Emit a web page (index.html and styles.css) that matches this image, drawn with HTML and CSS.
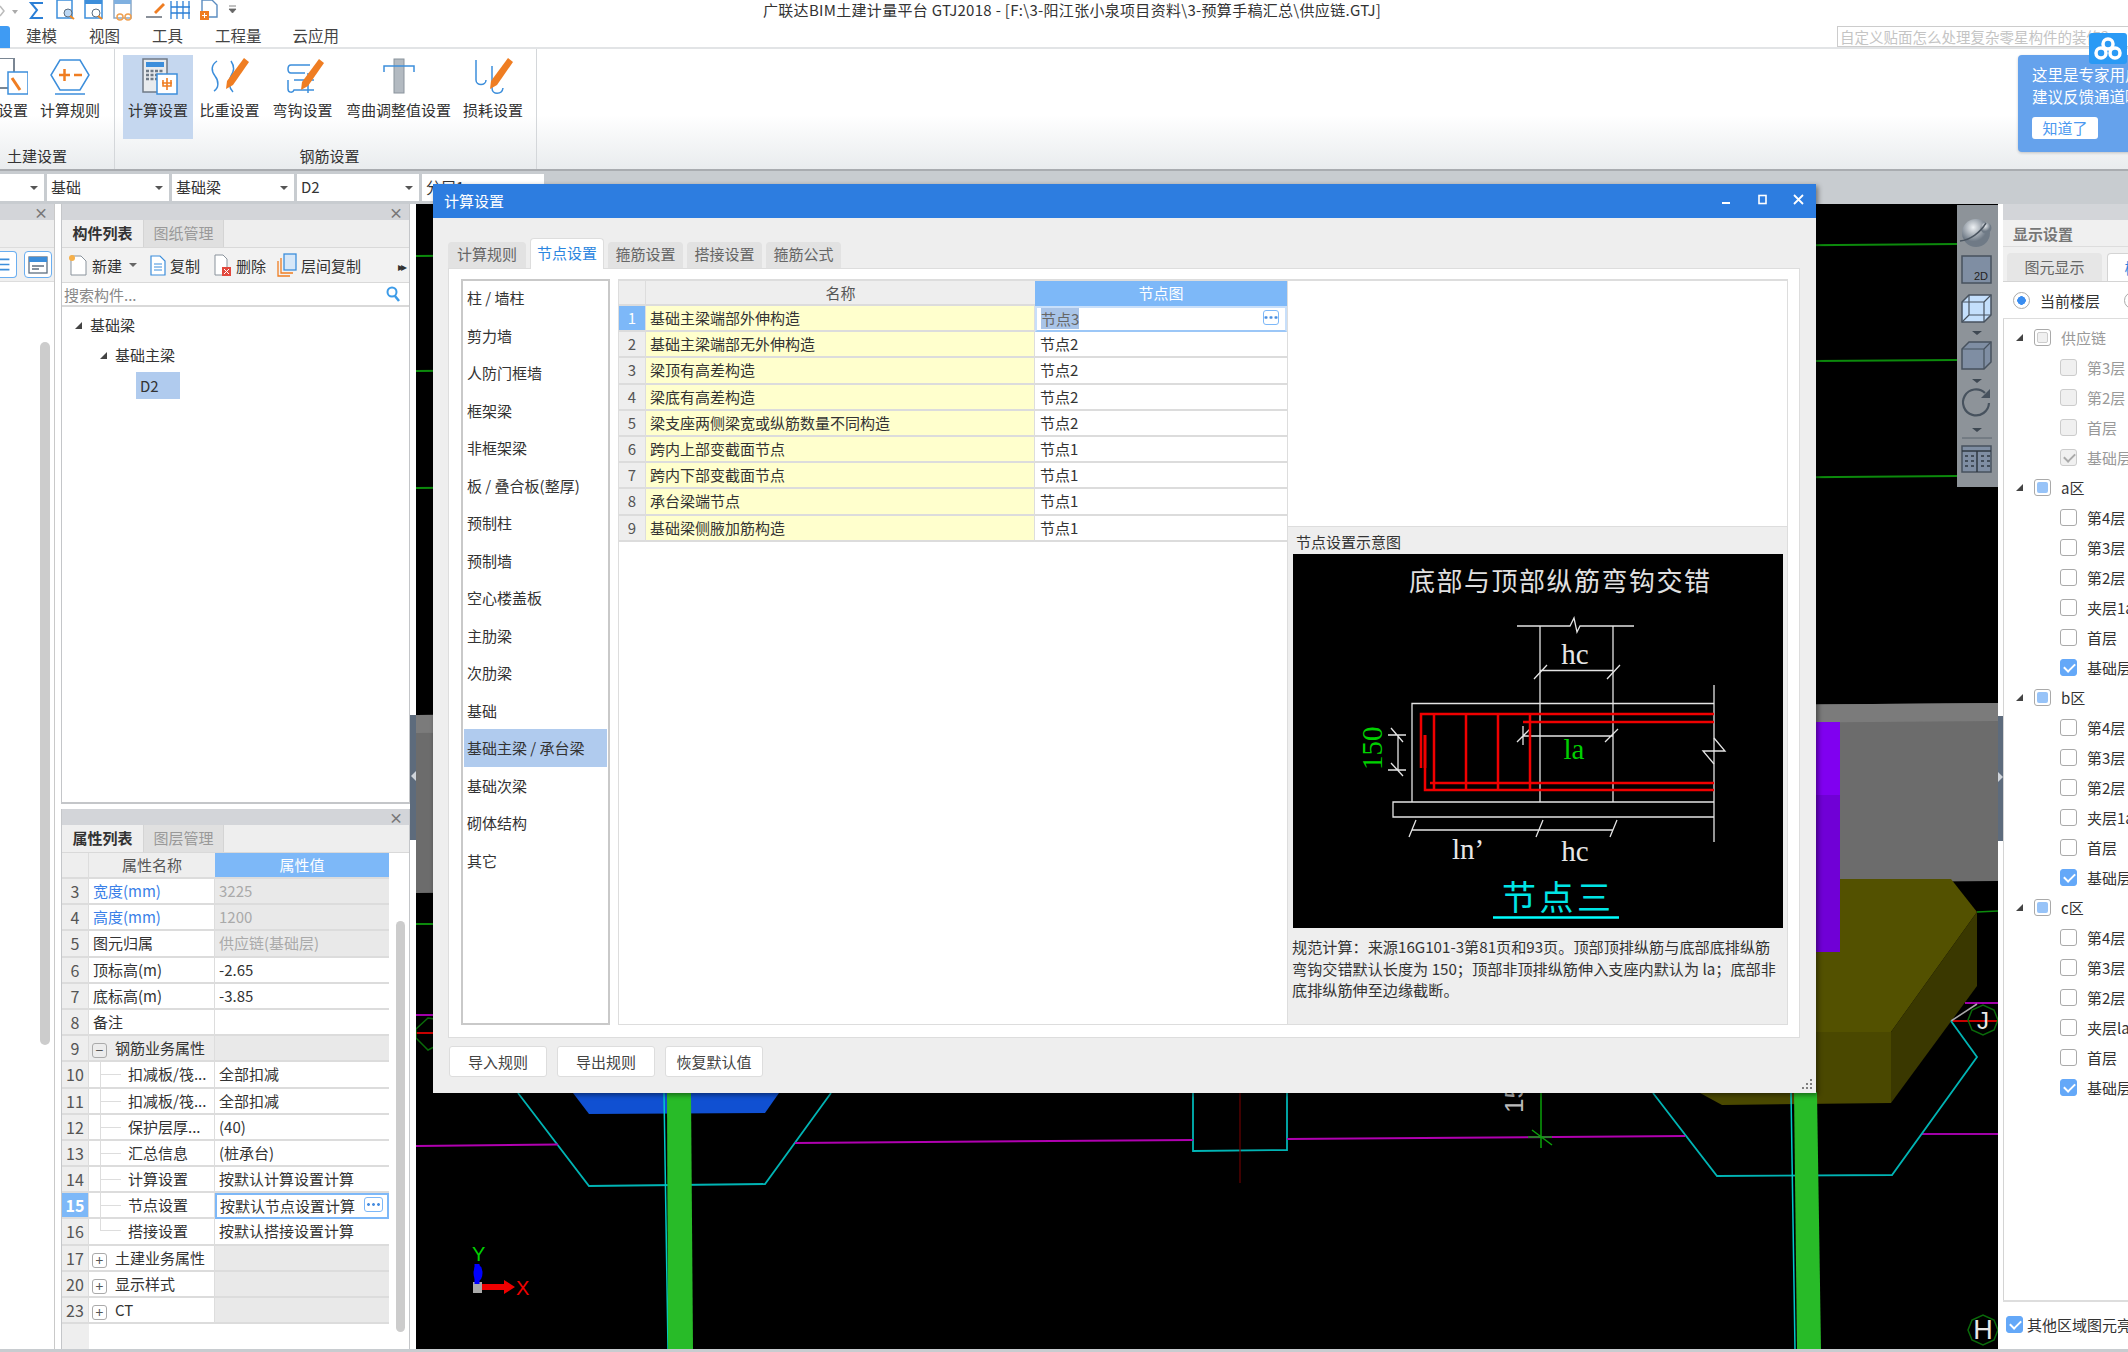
FILE: index.html
```html
<!DOCTYPE html>
<html lang="zh-CN">
<head>
  <meta charset="UTF-8">
  <title>广联达BIM土建计量平台 GTJ2018</title>
  <link rel="stylesheet" href="styles.css">
</head>
<body>
<div class="app">

  <!-- title bar -->
  <div class="titlebar">
    <div class="quick">
      <svg width="240" height="22" viewBox="0 0 240 22">
        <path d="M0 6l4 5-4 5" fill="none" stroke="#bbb" stroke-width="1.5"/>
        <path d="M12 10h6l-3 4z" fill="#aaa"/>
        <path d="M43 3H31l6 7-6 8h12" fill="none" stroke="#2b7fd6" stroke-width="2"/>
        <rect x="57" y="0" width="15" height="18" fill="#fff" stroke="#3c8edb" stroke-width="1.5"/>
        <circle cx="68" cy="13" r="4" fill="#bcd7f3" stroke="#5a6d80"/><path d="M70 16l4 3" stroke="#f08a24" stroke-width="2"/>
        <rect x="85" y="0" width="17" height="18" fill="#fff" stroke="#3c8edb" stroke-width="1.5"/><rect x="85" y="0" width="17" height="4" fill="#3c8edb"/>
        <circle cx="96" cy="13" r="4" fill="#fff" stroke="#5a6d80"/><path d="M98 16l4 3" stroke="#f08a24" stroke-width="2"/>
        <rect x="114" y="0" width="17" height="18" fill="#fff" stroke="#8aa8c6" stroke-width="1.5"/><rect x="114" y="0" width="17" height="4" fill="#7fb0e0"/>
        <circle cx="120" cy="17" r="3" fill="none" stroke="#f0a050" stroke-width="1.5"/><circle cx="128" cy="17" r="3" fill="none" stroke="#f0a050" stroke-width="1.5"/>
        <path d="M154 12l9-9 2 2-9 9z" fill="#ef7d22"/><path d="M146 17h16" stroke="#8a9099" stroke-width="2"/>
        <path d="M171 1v18M177 1v18M183 1v18M189 1v18M171 7h19M171 13h19" fill="none" stroke="#2b7fd6" stroke-width="1.3"/>
        <path d="M202 0h10l5 5v12h-15z" fill="#fff" stroke="#5a8cc0" stroke-width="1.4"/><rect x="200" y="11" width="9" height="9" fill="#ef7d22"/><path d="M204.500 13v5M202 15.500h5" stroke="#fff"/>
        <path d="M229 6h7M229 9h7l-3.500 4z" fill="#666" stroke="#666" stroke-width=".8"/>
      </svg>
    </div>
    <div class="apptitle">广联达BIM土建计量平台 GTJ2018 - [F:\3-阳江张小泉项目资料\3-预算手稿汇总\供应链.GTJ]</div>
  </div>

  <!-- menu -->
  <div class="menubar">
    <span class="menu-active"></span>
    <span class="menu-item m1">建模</span>
    <span class="menu-item m2">视图</span>
    <span class="menu-item m2">工具</span>
    <span class="menu-item m2">工程量</span>
    <span class="menu-item m3">云应用</span>
    <div class="asksearch">自定义贴面怎么处理复杂零星构件的装修？</div>
  </div>

  <!-- ribbon -->
  <div class="ribbon">
    <div class="rb-group g1">
      <div class="rb-btns">
        <div class="rb-btn w60 first">
          <svg class="rb-icon" width="60" height="38" viewBox="0 0 60 38"><rect x="20" y="0" width="26" height="30" fill="#fff" stroke="#7a8693" stroke-width="2"/><rect x="40" y="14" width="20" height="22" fill="#fff" stroke="#3c8edb" stroke-width="1.5"/><path d="M44 20l8 12" stroke="#ef7d22" stroke-width="3"/></svg>
          <span>软件设置</span>
        </div>
        <div class="rb-btn w60 second">
          <svg class="rb-icon" width="60" height="38" viewBox="0 0 60 38"><path d="M20 2h20l9 15-9 15H20L11 17z" fill="#fff" stroke="#3c8edb" stroke-width="1.5"/><path d="M19 17h11M24.500 11v12" stroke="#ef7d22" stroke-width="2.500"/><path d="M34 17h8" stroke="#ef7d22" stroke-width="2.500"/><path d="M15 36h30" stroke="#3c8edb" stroke-width="1.5"/></svg>
          <span>计算规则</span>
        </div>
      </div>
      <div class="rb-label left">土建设置</div>
    </div>
    <div class="rb-group g2">
      <div class="rb-btns">
        <div class="rb-btn w70 on">
          <svg class="rb-icon" width="50" height="38" viewBox="0 0 50 38"><rect x="10" y="1" width="24" height="33" fill="#e8ebee" stroke="#6f7a86" stroke-width="1.5"/><rect x="13" y="4" width="18" height="5" fill="#3c8edb"/><path d="M13 13h18M13 17h18M13 21h12" stroke="#6f7a86" stroke-width="2.500" stroke-dasharray="3 1.500"/><rect x="24" y="16" width="20" height="20" fill="#fff" stroke="#3c8edb" stroke-width="1.5"/><path d="M34 20v12M29 25h10M30 22v6h8v-6" fill="none" stroke="#ef7d22" stroke-width="1.600"/></svg>
          <span>计算设置</span>
        </div>
        <div class="rb-btn w73">
          <svg class="rb-icon" width="50" height="38" viewBox="0 0 50 38"><path d="M12 3c-6 4-6 10-2 15s4 12-1 15M26 3c4 6 3 10 0 15s-2 12 2 16" fill="none" stroke="#3c8edb" stroke-width="1.500"/><path d="M39 0l5 4-16 23-7 4 1-8z" fill="#ef7d22"/></svg>
          <span>比重设置</span>
        </div>
        <div class="rb-btn w73">
          <svg class="rb-icon" width="50" height="38" viewBox="0 0 50 38"><path d="M32 7H13c-4 0-4 8 0 8h14M30 15v20M10 22v9c0 4 5 4 6 1h20M16 22h20" fill="none" stroke="#3c8edb" stroke-width="1.500"/><path d="M41 1l5 4-16 23-7 4 1-8z" fill="#ef7d22"/></svg>
          <span>弯钩设置</span>
        </div>
        <div class="rb-btn w119">
          <svg class="rb-icon" width="50" height="38" viewBox="0 0 50 38"><rect x="20" y="1" width="10" height="34" fill="#b3bac1" stroke="#8a939c"/><path d="M10 14V8h30v6" fill="none" stroke="#3c8edb" stroke-width="1.500"/></svg>
          <span>弯曲调整值设置</span>
        </div>
        <div class="rb-btn w70">
          <svg class="rb-icon" width="50" height="38" viewBox="0 0 50 38"><path d="M8 2v20c0 6 10 6 10 0M24 8v22c0 7 10 7 11 0" fill="none" stroke="#3c8edb" stroke-width="1.500"/><path d="M40 0l5 4-16 23-7 4 1-8z" fill="#ef7d22"/></svg>
          <span>损耗设置</span>
        </div>
      </div>
      <div class="rb-label">钢筋设置</div>
    </div>
  </div>

  <!-- layer / type combos -->
  <div class="combobar">
    <div class="combo c0"></div>
    <div class="combo">基础</div>
    <div class="combo">基础梁</div>
    <div class="combo">D2</div>
    <div class="combo">分层1</div>
  </div>

  <div class="main">

    <!-- collapsed navigation strip -->
    <div class="strip">
      <div class="phead"><span class="px">×</span></div>
      <div class="strip-tabs"></div>
      <div class="strip-tools">
        <span class="view-btn cut"><svg width="17" height="25" viewBox="0 0 17 25"><path d="M0 7h10M0 12.500h10M0 18h10" stroke="#3c8edb" stroke-width="1.800"/></svg></span>
        <span class="view-btn"><svg width="22" height="22" viewBox="0 0 22 22"><rect x="2" y="3" width="18" height="16" fill="#fff" stroke="#5f6f80" stroke-width="1.300"/><rect x="2" y="3" width="18" height="5" fill="#3c8edb"/><path d="M5 12h12M5 15h7" stroke="#5f6f80" stroke-width="1.300"/></svg></span>
      </div>
      <div class="strip-scroll"></div>
    </div>

    <!-- left panels -->
    <div class="leftcol">
      <div class="panel comp">
        <div class="phead"><span class="px">×</span></div>
        <div class="ptabs">
          <span class="ptab on">构件列表</span>
          <span class="ptab">图纸管理</span>
        </div>
        <div class="ptools">
          <svg class="t-ico new" width="20" height="24" viewBox="0 0 20 24"><path d="M3 3h10l5 5v14H3z" fill="#fff" stroke="#8a939c"/><circle cx="4" cy="5" r="3" fill="#f6b04a"/></svg>
          <span class="t-txt">新建</span><span class="t-caret"></span>
          <svg class="t-ico copy" width="16" height="22" viewBox="0 0 16 22"><path d="M1 2h9l5 5v14H1z" fill="#fff" stroke="#3c8edb" stroke-width="1.200"/><path d="M4 10h8M4 13h8M4 16h8" stroke="#3c8edb"/></svg>
          <span class="t-txt">复制</span>
          <svg class="t-ico del" width="18" height="24" viewBox="0 0 18 24"><path d="M1 2h8l4 4v16H1z" fill="#fff" stroke="#8a939c"/><rect x="8" y="14" width="9" height="9" fill="#e2483d"/><path d="M10 16l5 5M15 16l-5 5" stroke="#fff"/></svg>
          <span class="t-txt">删除</span>
          <svg class="t-ico cross" width="20" height="24" viewBox="0 0 20 24"><path d="M1 8v15h12M4 5v15h12" fill="none" stroke="#ef7d22" stroke-width="1.300"/><rect x="7" y="1" width="12" height="16" fill="#d6e7f8" stroke="#3c8edb" stroke-width="1.300"/></svg>
          <span class="t-txt">层间复制</span>
          <span class="t-more">▸▸</span>
        </div>
        <div class="psearch"><span>搜索构件...</span>
          <svg width="16" height="18" viewBox="0 0 16 18"><circle cx="7" cy="7" r="4.500" fill="none" stroke="#3c9be8" stroke-width="2"/><path d="M10 11l4 5" stroke="#3c9be8" stroke-width="2.500"/></svg>
        </div>
        <div class="ctree">
          <div class="ct l1"><i class="tri"></i>基础梁</div>
          <div class="ct l2"><i class="tri"></i>基础主梁</div>
          <div class="ct l3"><span class="ct-sel">D2</span></div>
        </div>
      </div>

      <div class="panel prop">
        <div class="phead"><span class="px">×</span></div>
        <div class="ptabs">
          <span class="ptab on">属性列表</span>
          <span class="ptab">图层管理</span>
        </div>
        <div class="prop-body">
          <div class="prop-col">
            <div class="pgrid">
              <div class="pc num"></div><div class="pc hdr">属性名称</div><div class="pc hdr sel">属性值</div>
              <div class="pc num">3</div><div class="pc name blue">宽度(mm)</div><div class="pc val ro">3225</div>
              <div class="pc num">4</div><div class="pc name blue">高度(mm)</div><div class="pc val ro">1200</div>
              <div class="pc num">5</div><div class="pc name">图元归属</div><div class="pc val ro">供应链(基础层)</div>
              <div class="pc num">6</div><div class="pc name">顶标高(m)</div><div class="pc val">-2.65</div>
              <div class="pc num">7</div><div class="pc name">底标高(m)</div><div class="pc val">-3.85</div>
              <div class="pc num">8</div><div class="pc name">备注</div><div class="pc val"></div>
              <div class="pc num">9</div><div class="pc name group"><i class="pm">−</i>钢筋业务属性</div><div class="pc val grp"></div>
              <div class="pc num">10</div><div class="pc name child">扣减板/筏...</div><div class="pc val">全部扣减</div>
              <div class="pc num">11</div><div class="pc name child">扣减板/筏...</div><div class="pc val">全部扣减</div>
              <div class="pc num">12</div><div class="pc name child">保护层厚...</div><div class="pc val">(40)</div>
              <div class="pc num">13</div><div class="pc name child">汇总信息</div><div class="pc val">(桩承台)</div>
              <div class="pc num">14</div><div class="pc name child">计算设置</div><div class="pc val">按默认计算设置计算</div>
              <div class="pc num cur">15</div><div class="pc name child">节点设置</div><div class="pc val edit">按默认节点设置计算<b class="dots"></b></div>
              <div class="pc num">16</div><div class="pc name child last">搭接设置</div><div class="pc val">按默认搭接设置计算</div>
              <div class="pc num">17</div><div class="pc name"><i class="pm">+</i>土建业务属性</div><div class="pc val grp"></div>
              <div class="pc num">20</div><div class="pc name"><i class="pm">+</i>显示样式</div><div class="pc val grp"></div>
              <div class="pc num">23</div><div class="pc name"><i class="pm">+</i>CT</div><div class="pc val grp"></div>
            </div>
            <div class="pfill"></div>
          </div>
          <div class="prop-scroll"></div>
        </div>
      </div>
    </div>

    <div class="splitter"><div class="split-grip"><i class="arr-l"></i></div></div>

    <!-- 3D drawing area, page coordinates in the viewBox -->
    <div class="canvas">
      <svg class="scene" viewBox="416 205 1582 1145" width="1582" height="1145">
        <path d="M416 257L1957 245M416 372L1957 361M416 489L1957 477" stroke="#0c8a0c" stroke-width="2" fill="none"/>
        <path d="M416 716L1998 704V882L416 894z" fill="#6c6c6c"/>
        <path d="M416 716L1998 704V722L416 734z" fill="#7b7b7b"/>
        <path d="M416 925h60" stroke="#0c8a0c" stroke-width="2"/>
        <path d="M1700 880H1951L1977 913L1891 1033H1700z" fill="#535100"/>
        <path d="M1816 723h24v230h-24z" fill="#7000d6"/>
        <path d="M1816 723h24v73h-24z" fill="#8000f0"/>
        <path d="M1977 913V987L1891 1104V1033z" fill="#3a3800"/>
        <path d="M1700 1033H1891V1104L1722 1106L1700 1094z" fill="#4a4800"/>
        <path d="M1977 913L1998 912" stroke="#0c8a0c" stroke-width="1.500"/>
        <path d="M1965 1004H1998M1922 1135H1998M416 1016H433" stroke="#a000a8" stroke-width="2"/>
        <path d="M1951 1022H1998M416 1034H433" stroke="#c80000" stroke-width="2"/>
        <path d="M1951 1022L1977 1005" stroke="#aaa" stroke-width="1.500"/>
        <path d="M1968 1021l4-10 11-5 11 5 4 10-4 10-11 5-11-5z" fill="none" stroke="#0a6a0a" stroke-width="1.500"/>
        <path d="M416 1030l12-11 6 1v28l-6 3-12-12z" fill="none" stroke="#0a6a0a" stroke-width="1.500"/>
        <text class="scene-j" x="1983" y="1030" text-anchor="middle">J</text>
        <path d="M1968 1331l4-10 11-5 11 5 4 10-4 10-11 5-11-5z" fill="none" stroke="#0a6a0a" stroke-width="1.500"/>
        <text class="scene-j big" x="1983" y="1340" text-anchor="middle">H</text>
        <path d="M1951 1022L1977 1058L1892 1176L1717 1177L1653 1094" fill="none" stroke="#00b4b4" stroke-width="1.800"/>
        <path d="M1193 1094L1193 1152L1287 1151L1287 1094" fill="none" stroke="#00b4b4" stroke-width="1.800"/>
        <path d="M518 1094L589 1187L765 1185L831 1094" fill="none" stroke="#00b4b4" stroke-width="1.800"/>
        <path d="M573 1094L589 1115L765 1114L779 1094z" fill="#1050d2"/>
        <path d="M416 1147L558 1145.500M795 1144L1193 1141M1287 1140L1685 1137" stroke="#b000b0" stroke-width="2" fill="none"/>
        <path d="M1240 1094V1184" stroke="#6a0000" stroke-width="1.200"/>
        <path d="M664 1094L668 1350M1791 1094L1795 1350" stroke="#00c8c8" stroke-width="1.500" fill="none"/>
        <path d="M667 1094H691L693 1350H668z" fill="#28bb28"/>
        <path d="M1794 1093H1817L1821 1350H1797z" fill="#28bb28"/>
        <path d="M1541 1094V1149M1528 1138H1552M1532 1131L1552 1146" stroke="#0aa00a" stroke-width="1.500" fill="none"/>
        <text class="scene-dim" transform="translate(1523 1114) rotate(-90)">15</text>
        <rect x="473" y="1283" width="9" height="11" fill="#aaa"/>
        <path d="M477 1285V1265" stroke="#0000ff" stroke-width="5"/>
        <ellipse cx="478" cy="1274" rx="4.500" ry="8" fill="#0000ff"/>
        <path d="M482 1285H504V1281L515 1288L504 1295V1291H482z" fill="#f00000"/>
        <text class="scene-axis red" x="516" y="1296">X</text>
        <text class="scene-axis green" x="472" y="1262">Y</text>
      </svg>

      <div class="viewbar">
        <svg width="38" height="278" viewBox="0 0 38 278">
          <defs><radialGradient id="ball" cx=".4" cy=".3"><stop offset="0" stop-color="#eef1f4"/><stop offset="1" stop-color="#6f7a86"/></radialGradient></defs>
          <circle cx="19" cy="27" r="14" fill="url(#ball)"/><circle cx="29" cy="22" r="5.500" fill="url(#ball)"/><path d="M3 35c10-1 20-8 26-18" fill="none" stroke="#4b5560" stroke-width="1.500"/>
          <rect x="5" y="50" width="29" height="27" fill="#7f8ea3" stroke="#47525e" stroke-width="1.500"/><text class="vb-2d" x="17" y="74">2D</text>
          <path d="M5 96l7-7h22v20l-7 7H5z" fill="#c4dffc" stroke="#47525e" stroke-width="1.500"/><path d="M5 96h22v20M27 96l7-7M12 89v20h22M5 116l7-7" fill="none" stroke="#47525e" stroke-width="1.200"/>
          <path d="M15 125h10l-5 4z" fill="#3e4852"/>
          <path d="M5 143l7-7h22v20l-7 7H5z" fill="#7f8ea3" stroke="#47525e" stroke-width="1.500"/><path d="M5 143h22v20M27 143l7-7" fill="none" stroke="#47525e" stroke-width="1.200"/>
          <path d="M15 173h10l-5 4z" fill="#3e4852"/>
          <path d="M32 197a13 13 0 1 1-4-10" fill="none" stroke="#47525e" stroke-width="2.200"/><path d="M33 183v9h-9z" fill="#47525e"/>
          <path d="M15 222h10l-5 4z" fill="#3e4852"/>
          <path d="M5 232h30" stroke="#5a646e"/>
          <rect x="5" y="240" width="29" height="26" fill="#7f8ea3" stroke="#47525e" stroke-width="1.500"/><path d="M5 245h29M20 245v21M8 250h3M14 250h3M8 255h3M14 255h3M8 260h3M14 260h3M24 250h3M30 250h3M24 255h3M30 255h3M24 260h3M30 260h3" stroke="#2f3842" stroke-width="1.500"/>
        </svg>
      </div>
    </div>

    <div class="splitter right"><div class="split-grip r2"><i class="arr-r"></i></div></div>

    <!-- right panel: display settings -->
    <div class="rightcol">
      <div class="phead"></div>
      <div class="r-title">显示设置</div>
      <div class="r-tabs">
        <span class="r-tab">图元显示</span>
        <span class="r-tab on">楼层显示</span>
      </div>
      <div class="r-radio">
        <span class="radio"></span><span class="r-label">当前楼层</span><span class="radio off"></span>
      </div>
      <div class="r-tree">
        <div class="rt grp dis"><i class="tri"></i><span class="cb part off"></span>供应链</div>
        <div class="rt dis"><span class="cb dim"></span>第3层</div>
        <div class="rt dis"><span class="cb dim"></span>第2层</div>
        <div class="rt dis"><span class="cb dim"></span>首层</div>
        <div class="rt dis"><span class="cb dim chk"></span>基础层</div>
        <div class="rt grp"><i class="tri"></i><span class="cb part"></span>a区</div>
        <div class="rt"><span class="cb"></span>第4层</div>
        <div class="rt"><span class="cb"></span>第3层</div>
        <div class="rt"><span class="cb"></span>第2层</div>
        <div class="rt"><span class="cb"></span>夹层1a</div>
        <div class="rt"><span class="cb"></span>首层</div>
        <div class="rt"><span class="cb on"></span>基础层</div>
        <div class="rt grp"><i class="tri"></i><span class="cb part"></span>b区</div>
        <div class="rt"><span class="cb"></span>第4层</div>
        <div class="rt"><span class="cb"></span>第3层</div>
        <div class="rt"><span class="cb"></span>第2层</div>
        <div class="rt"><span class="cb"></span>夹层1a</div>
        <div class="rt"><span class="cb"></span>首层</div>
        <div class="rt"><span class="cb on"></span>基础层</div>
        <div class="rt grp"><i class="tri"></i><span class="cb part"></span>c区</div>
        <div class="rt"><span class="cb"></span>第4层</div>
        <div class="rt"><span class="cb"></span>第3层</div>
        <div class="rt"><span class="cb"></span>第2层</div>
        <div class="rt"><span class="cb"></span>夹层la</div>
        <div class="rt"><span class="cb"></span>首层</div>
        <div class="rt"><span class="cb on"></span>基础层</div>
      </div>
      <div class="r-foot"><span class="cb on"></span>其他区域图元亮显</div>
    </div>
  </div>
  <div class="statusline"></div>

  <!-- expert tip, overlays the ribbon -->
  <div class="tipicon">
    <svg width="30" height="24" viewBox="0 0 30 24"><g fill="none" stroke="#fff" stroke-width="3.500"><circle cx="15" cy="7" r="5"/><circle cx="8" cy="16" r="5"/><circle cx="22" cy="16" r="5"/></g></svg>
  </div>
  <div class="tip">
    <p>这里是专家用户</p>
    <p>建议反馈通道哦</p>
    <span class="tip-btn">知道了</span>
  </div>

  <!-- modal dialog -->
  <div class="dialog">
    <div class="dlg-title">
      <span>计算设置</span>
      <div class="dlg-win">
        <svg width="12" height="12" viewBox="0 0 12 12"><path d="M1 9h8" stroke="#fff" stroke-width="2"/></svg>
        <svg width="12" height="12" viewBox="0 0 12 12"><rect x="2" y="1.500" width="7" height="8" fill="none" stroke="#fff" stroke-width="1.600"/></svg>
        <svg width="12" height="12" viewBox="0 0 12 12"><path d="M1 1l9 9M10 1l-9 9" stroke="#fff" stroke-width="1.800"/></svg>
      </div>
    </div>
    <div class="dlg-tabs">
      <span class="dtab first-tab">计算规则</span>
      <span class="dtab on">节点设置</span>
      <span class="dtab">箍筋设置</span>
      <span class="dtab">搭接设置</span>
      <span class="dtab">箍筋公式</span>
    </div>
    <div class="dlg-pane">
      <div class="dlg-list">
        <div class="li">柱 / 墙柱</div>
        <div class="li">剪力墙</div>
        <div class="li">人防门框墙</div>
        <div class="li">框架梁</div>
        <div class="li">非框架梁</div>
        <div class="li">板 / 叠合板(整厚)</div>
        <div class="li">预制柱</div>
        <div class="li">预制墙</div>
        <div class="li">空心楼盖板</div>
        <div class="li">主肋梁</div>
        <div class="li">次肋梁</div>
        <div class="li">基础</div>
        <div class="li on">基础主梁 / 承台梁</div>
        <div class="li">基础次梁</div>
        <div class="li">砌体结构</div>
        <div class="li">其它</div>
      </div>
      <div class="dlg-main">
        <div class="ngrid">
          <div class="nc nnum"></div><div class="nc nhdr">名称</div><div class="nc nhdr sel">节点图</div>
          <div class="nc nnum cur">1</div><div class="nc nname">基础主梁端部外伸构造</div><div class="nc nval edit"><span class="selected">节点3</span><b class="dots small"></b></div>
          <div class="nc nnum">2</div><div class="nc nname">基础主梁端部无外伸构造</div><div class="nc nval">节点2</div>
          <div class="nc nnum">3</div><div class="nc nname">梁顶有高差构造</div><div class="nc nval">节点2</div>
          <div class="nc nnum">4</div><div class="nc nname">梁底有高差构造</div><div class="nc nval">节点2</div>
          <div class="nc nnum">5</div><div class="nc nname">梁支座两侧梁宽或纵筋数量不同构造</div><div class="nc nval">节点2</div>
          <div class="nc nnum">6</div><div class="nc nname">跨内上部变截面节点</div><div class="nc nval">节点1</div>
          <div class="nc nnum">7</div><div class="nc nname">跨内下部变截面节点</div><div class="nc nval">节点1</div>
          <div class="nc nnum">8</div><div class="nc nname">承台梁端节点</div><div class="nc nval">节点1</div>
          <div class="nc nnum">9</div><div class="nc nname">基础梁侧腋加筋构造</div><div class="nc nval">节点1</div>
        </div>
        <div class="dlg-side">
          <div class="side-top"></div>
          <div class="side-box">
            <div class="side-cap">节点设置示意图</div>
            <svg class="detail" viewBox="1293 555 490 374" width="490" height="374">
              <text class="d-title" x="1409" y="592" textLength="301">底部与顶部纵筋弯钩交错</text>
              <g fill="none" stroke="#e4e4e4" stroke-width="1.300">
                <path d="M1517 627H1570L1574 619L1577 633L1580 627H1634"/>
                <path d="M1540 627V803M1613 627V803"/>
                <path d="M1540 671.500H1613M1534 680L1547 666M1607 680L1620 666"/>
                <path d="M1412 803V704.500H1714"/>
                <path d="M1393 803H1714V818H1393zM1714 686V843"/>
                <path d="M1714 739L1725 752L1703 752L1714 765"/>
                <path d="M1412 831H1613M1409 838L1416 821M1536 838L1543 821M1610 838L1617 821"/>
                <path d="M1388 736H1406M1388 771H1406M1398 736V771M1391 729L1403 743M1391 764L1403 777"/>
                <path d="M1523 737H1613M1523 727V746M1517 743L1530 730M1605 743L1618 730"/>
              </g>
              <g fill="none" stroke="#f00000" stroke-width="2.500">
                <path d="M1421 769V715H1714M1523 723H1714"/>
                <path d="M1425 736V769" stroke-width="3"/>
                <path d="M1425 769V791H1714M1430 784H1714"/>
                <path d="M1434 715V791M1466 715V791M1498 715V791M1530 715V791"/>
              </g>
              <text class="d-dim" x="1575" y="665" text-anchor="middle">hc</text>
              <text class="d-dim green" x="1574" y="760" text-anchor="middle">la</text>
              <text class="d-dim green" transform="translate(1382 771) rotate(-90)">150</text>
              <text class="d-dim" x="1468" y="860" text-anchor="middle">ln’</text>
              <text class="d-dim" x="1575" y="862" text-anchor="middle">hc</text>
              <text class="d-node" x="1502" y="911" textLength="109">节点三</text>
              <path d="M1493 918.500H1619" stroke="#00ffff" stroke-width="2.500"/>
            </svg>
            <div class="side-desc">规范计算：来源16G101-3第81页和93页。顶部顶排纵筋与底部底排纵筋<br>弯钩交错默认长度为 150；顶部非顶排纵筋伸入支座内默认为 la；底部非<br>底排纵筋伸至边缘截断。</div>
          </div>
        </div>
      </div>
    </div>
    <div class="dlg-foot">
      <span class="fbtn">导入规则</span>
      <span class="fbtn">导出规则</span>
      <span class="fbtn">恢复默认值</span>
      <svg class="grip" width="12" height="12" viewBox="0 0 12 12"><path d="M9 1h2v2H9zM5 5h2v2H5zM9 5h2v2H9zM1 9h2v2H1zM5 9h2v2H5zM9 9h2v2H9z" fill="#7f7f7f"/></svg>
    </div>
  </div>

</div>
</body>
</html>
```

FILE: styles.css
```css
* {
  box-sizing: border-box;
}

html, body {
  margin: 0;
  padding: 0;
}

body {
  font-family: "Noto Sans CJK SC", "Noto Sans", sans-serif;
  font-size: 15px;
  color: #333;
}

.app {
  position: relative;
  width: 2128px;
  height: 1352px;
  overflow: hidden;
  background: #c8ccd0;
  display: flex;
  flex-direction: column;
}

/* title + menu */
.titlebar {
  height: 22px;
  background: #fff;
  display: flex;
  flex: none;
  overflow: hidden;
}

.quick {
  width: 763px;
  flex: none;
}

.quick svg {
  display: block;
}

.apptitle {
  font-size: 15px;
  line-height: 20px;
  letter-spacing: 0.3px;
  white-space: nowrap;
  color: #333;
}

.menubar {
  height: 27px;
  flex: none;
  background: #fff;
  border-bottom: 2px solid #e2e4e6;
  display: flex;
  align-items: center;
  position: relative;
}

.menu-active {
  width: 10px;
  height: 22px;
  margin-top: 5px;
  background: #3f9bf3;
  border-radius: 0 3px 0 0;
}

.menu-item {
  font-size: 15.500px;
  color: #444;
}

.m1 { margin-left: 16px; }
.m2 { margin-left: 32px; }
.m3 { margin-left: 31px; }

.asksearch {
  position: absolute;
  left: 1837px;
  top: 4px;
  width: 300px;
  height: 21px;
  border: 1px solid #ccc;
  font-size: 14.500px;
  line-height: 19px;
  padding-left: 2px;
  color: #c4c4c4;
  white-space: nowrap;
}

/* ribbon */
.ribbon {
  height: 122px;
  flex: none;
  display: flex;
  background: linear-gradient(#fff 55%, #e9ecee);
  border-bottom: 2px solid #a9acb0;
}

.rb-group {
  height: 120px;
  border-right: 1px solid #d4d7da;
  padding-top: 6px;
  overflow: hidden;
}

.g1 { width: 115px; }
.g2 { width: 422px; padding-left: 8px; }

.rb-btns {
  display: flex;
  height: 84px;
}

.rb-btn {
  flex: none;
  display: flex;
  flex-direction: column;
  align-items: center;
  padding-top: 3px;
  white-space: nowrap;
  color: #333;
}

.rb-btn.on { background: #c5d7ef; }

.rb-icon {
  display: block;
  height: 38px;
  margin-bottom: 3px;
}

.w60 { width: 60px; }
.w70 { width: 70px; }
.w73 { width: 73px; }
.w119 { width: 119px; }

.first { margin-left: -32px; }
.second { margin-left: 12px; }

.rb-label {
  margin-top: 6px;
  text-align: center;
  line-height: 22px;
}

.rb-label.left {
  text-align: left;
  padding-left: 7px;
}

/* combos */
.combobar {
  height: 33px;
  flex: none;
  display: flex;
  gap: 3px;
  padding-top: 3px;
  background: #c8ccd0;
}

.combo {
  position: relative;
  width: 122px;
  height: 27px;
  background: #fff;
  line-height: 26px;
  padding-left: 4px;
  color: #333;
}

.combo.c0 { width: 44px; }

.combo::after {
  content: "";
  position: absolute;
  right: 6px;
  top: 12px;
  border: 4px solid transparent;
  border-top-color: #555;
}

/* main row */
.main {
  height: 1145px;
  flex: none;
  display: flex;
  background: #fff;
}

.statusline {
  flex: 1;
  background: #c8ccd0;
}

.phead {
  height: 16px;
  flex: none;
  background: #d3d5d9;
  display: flex;
  justify-content: flex-end;
  align-items: center;
  padding-right: 6px;
}

.px {
  font-size: 14px;
  line-height: 15px;
  color: #777;
  font-weight: bold;
}

/* nav strip */
.strip {
  width: 55px;
  flex: none;
  border-right: 1px solid #c9c9c9;
  background: #fff;
}

.strip-tabs {
  height: 27px;
  background: #eee;
}

.strip-tools {
  height: 35px;
  display: flex;
  justify-content: space-between;
  align-items: center;
  padding-right: 2px;
  background: #f0f0f0;
  border-top: 1px solid #ddd;
  border-bottom: 1px solid #ddd;
}

.view-btn {
  width: 28px;
  height: 27px;
  border: 1.500px solid #6aaef0;
  border-radius: 4px;
  display: flex;
  align-items: center;
  justify-content: center;
  background: #fff;
}

.view-btn.cut {
  width: 17px;
  border-left: 0;
  border-radius: 0 4px 4px 0;
  background: #fff;
}

.strip-scroll {
  width: 10px;
  height: 703px;
  margin: 60px 0 0 40px;
  background: #ccc;
  border-radius: 5px;
}

/* left column */
.leftcol {
  width: 349px;
  margin-left: 6px;
  flex: none;
  display: flex;
  flex-direction: column;
}

.panel {
  display: flex;
  flex-direction: column;
  border: 1px solid #c4c6c9;
  border-top: 0;
  background: #fff;
}

.panel.comp { height: 600px; border-bottom-width: 2px; }
.panel.prop { height: 540px; margin-top: 5px; border-bottom: 0; }

.ptabs {
  height: 28px;
  flex: none;
  display: flex;
  background: #eee;
  border-bottom: 1px solid #d9d9d9;
}

.ptab {
  width: 81px;
  text-align: center;
  line-height: 26px;
  background: #e0e0e0;
  color: #999;
  border-left: 1px solid #d4d4d4;
  border-right: 1px solid #d4d4d4;
}

.ptab.on {
  background: #efefef;
  color: #333;
  font-weight: bold;
  border: 0;
}

.ptools {
  height: 35px;
  flex: none;
  display: flex;
  align-items: center;
  background: #f2f2f2;
  border-bottom: 1px solid #d9d9d9;
  color: #333;
}

.t-ico { flex: none; }
.t-ico.new { margin-left: 6px; }
.t-ico.copy { margin-left: 13px; }
.t-ico.del { margin-left: 14px; }
.t-ico.cross { margin-left: 11px; }

.t-txt {
  margin-left: 4px;
  white-space: nowrap;
}

.t-caret {
  margin: 4px 0 0 7px;
  border: 4px solid transparent;
  border-top-color: #666;
}

.t-more {
  margin-left: auto;
  margin-right: 5px;
  font-size: 12px;
  letter-spacing: -3px;
  color: #333;
}

.psearch {
  height: 24px;
  flex: none;
  display: flex;
  justify-content: space-between;
  align-items: center;
  padding: 0 8px 0 2px;
  color: #888;
  background: #fff;
  border-bottom: 2px solid #d9d9d9;
}

.ctree {
  padding-top: 3px;
}

.ct {
  height: 30px;
  line-height: 30px;
  display: flex;
  align-items: center;
}

.l1 { padding-left: 13px; }
.l2 { padding-left: 38px; }
.l3 { padding-left: 74px; }

.tri {
  display: inline-block;
  width: 0;
  height: 0;
  margin-right: 8px;
  border-style: solid;
  border-width: 0 0 7px 7px;
  border-color: transparent transparent #444 transparent;
}

.ct-sel {
  width: 44px;
  height: 27px;
  line-height: 27px;
  padding-left: 4px;
  background: #b0cbee;
}

/* property grid */
.prop-body {
  flex: 1;
  display: flex;
  min-height: 0;
}

.prop-col {
  width: 327px;
  display: flex;
  flex-direction: column;
}

.pgrid {
  display: grid;
  grid-template-columns: 27px 126px 174px;
  grid-template-rows: 26px repeat(17, 26.200px);
}

.pc {
  border-bottom: 2px solid #dcdcdc;
  line-height: 24px;
  white-space: nowrap;
  overflow: hidden;
  position: relative;
}

.num {
  background: #eee;
  border-right: 1px solid #ddd;
  text-align: center;
  font-size: 16px;
  color: #555;
}

.num.cur {
  background: #7db8f8;
  color: #fff;
  font-weight: bold;
}

.hdr {
  background: #eee;
  text-align: center;
  color: #555;
}

.hdr.sel {
  background: #7db8f8;
  color: #fff;
}

.name {
  padding-left: 4px;
  border-right: 1px solid #ddd;
}

.name.blue { color: #3a7fe8; }
.name.group { background: #ececec; }

.name.child { padding-left: 39px; }

.name.child::before {
  content: "";
  position: absolute;
  left: 11px;
  top: -2px;
  width: 20px;
  height: 28px;
  border-left: 1px solid #ddd;
  background: linear-gradient(#ddd, #ddd) no-repeat 0 14px / 100% 1px;
}

.name.child.last::before { height: 14px; background-position: 0 13px; }

.pm {
  display: inline-block;
  width: 15px;
  height: 15px;
  margin: 0 8px 0 -1px;
  border: 1px solid #aaa;
  border-radius: 3px;
  font-style: normal;
  font-size: 14px;
  line-height: 12px;
  text-align: center;
  vertical-align: -2px;
  color: #555;
}

.val { padding-left: 4px; }

.val.ro {
  background: #e9e9e9;
  color: #aaa;
}

.val.grp { background: #e9e9e9; }

.val.edit {
  border: 2px solid #7db8f8;
  padding-left: 3px;
  line-height: 22px;
}

/* the "..." edit button drawn as three dots */
.dots {
  position: absolute;
  right: 4px;
  top: 2px;
  width: 19px;
  height: 15px;
  border: 1px solid #7db8f8;
  border-radius: 3px;
  background: radial-gradient(circle, #4a8fe0 0 1.200px, transparent 1.600px) center / 5px 5px repeat-x;
  background-color: #fff;
}

.pfill {
  flex: 1;
  width: 27px;
  background: #eee;
}

.prop-scroll {
  width: 9px;
  height: 411px;
  margin: 68px 0 0 7px;
  background: #ccc;
  border-radius: 5px;
}

/* splitters */
.splitter {
  width: 6px;
  flex: none;
  background: #fff;
  padding-top: 511px;
}

.splitter.right { width: 5px; padding-top: 512px; }

.split-grip {
  position: relative;
  height: 125px;
  background: #5d6b7c;
}

.arr-l, .arr-r {
  position: absolute;
  top: 56px;
  left: 0;
  border: 5px solid transparent;
}

.arr-l { border-right-color: #cfd4da; left: -4px; }
.arr-r { border-left-color: #cfd4da; left: 0; }

/* canvas */
.canvas {
  position: relative;
  width: 1582px;
  flex: none;
  height: 1145px;
  background: #000;
  overflow: hidden;
}

.scene {
  position: absolute;
  left: 0;
  top: 0;
}

.scene-j {
  font-size: 24px;
  fill: #e8e8e8;
  font-family: "Liberation Sans", sans-serif;
}

.scene-j.big { font-size: 27px; }

.scene-dim {
  font-size: 26px;
  fill: #bbb;
  font-family: "Liberation Sans", sans-serif;
}

.scene-axis {
  font-size: 20px;
  font-family: "Liberation Sans", sans-serif;
}

.scene-axis.red { fill: #f00000; }
.scene-axis.green { fill: #00d000; }

.viewbar {
  position: absolute;
  right: 0;
  top: 1px;
  width: 41px;
  height: 282px;
  background: #8d9399;
  padding-top: 1px;
}

.viewbar svg { display: block; }

.vb-2d {
  font-size: 11px;
  fill: #222;
  font-family: "Liberation Sans", sans-serif;
}

/* right panel */
.rightcol {
  flex: 1;
  min-width: 0;
  display: flex;
  flex-direction: column;
  background: #fff;
  overflow: hidden;
}

.r-title {
  height: 27px;
  flex: none;
  background: #f0f0f0;
  border-bottom: 1px solid #ddd;
  padding-left: 10px;
  line-height: 27px;
  color: #777;
  font-weight: bold;
}

.r-tabs {
  height: 35px;
  flex: none;
  display: flex;
  gap: 5px;
  padding: 6px 0 0 4px;
  background: #f0f0f0;
  border-bottom: 1px solid #d4d4d4;
}

.r-tab {
  width: 95px;
  flex: none;
  text-align: center;
  line-height: 28px;
  background: #e6e6e6;
  border-radius: 4px 4px 0 0;
  color: #666;
}

.r-tab.on {
  background: #fff;
  color: #2b86e0;
  border: 1px solid #d4d4d4;
  border-bottom: 0;
}

.r-radio {
  height: 37px;
  flex: none;
  display: flex;
  align-items: center;
  padding-left: 10px;
  white-space: nowrap;
  border-bottom: 1px solid #ddd;
}

.radio {
  width: 17px;
  height: 17px;
  flex: none;
  border: 1px solid #aaa;
  border-radius: 50%;
  background: radial-gradient(circle, #3a8df0 0 4px, #fff 4.500px);
}

.radio.off {
  margin-left: 24px;
  background: #fff;
}

.r-label {
  margin-left: 10px;
}

.r-tree {
  flex: 1;
  border-left: 1px solid #d4d4d4;
  padding-top: 3px;
}

.rt {
  height: 30px;
  display: flex;
  align-items: center;
  padding-left: 56px;
  white-space: nowrap;
  color: #333;
}

.rt.grp { padding-left: 12px; }
.rt.dis { color: #999; }

.rt .tri { margin-right: 11px; }

.cb {
  position: relative;
  width: 17px;
  height: 17px;
  flex: none;
  margin-right: 10px;
  border: 1px solid #aaa;
  border-radius: 3px;
  background: #fff;
}

.rt.grp .cb::before {
  content: "";
  position: absolute;
  inset: 2px;
  border-radius: 2px;
}

.cb.part::before { background: #97c3f8; }
.cb.part.off::before { background: #f0f0f0; border: 1px solid #ccc; }
.cb.dim { background: #f0f0f0; border-color: #ccc; }

.cb.on {
  background: #64a8f8;
  border-color: #64a8f8;
}

.cb.on::after,
.cb.chk::after {
  content: "";
  position: absolute;
  left: 3px;
  top: 3px;
  width: 9px;
  height: 5px;
  border-left: 2px solid #fff;
  border-bottom: 2px solid #fff;
  transform: rotate(-45deg);
}

.cb.chk::after { border-color: #aaa; }

.r-foot {
  height: 49px;
  flex: none;
  border-top: 2px solid #ddd;
  display: flex;
  align-items: center;
  padding: 0 0 3px 3px;
  white-space: nowrap;
}

.r-foot .cb { margin-right: 4px; }

/* tip */
.tipicon {
  position: absolute;
  left: 2089px;
  top: 33px;
  width: 38px;
  height: 31px;
  background: #2a9af5;
  border-radius: 3px;
  z-index: 3;
  display: flex;
  align-items: center;
  justify-content: center;
}

.tip {
  position: absolute;
  left: 2018px;
  top: 55px;
  width: 125px;
  height: 97px;
  padding: 8px 14px;
  background: #65a2ec;
  border-radius: 4px;
  color: #fff;
  box-shadow: 0 1px 3px rgba(0, 0, 0, 0.2);
  white-space: nowrap;
}

.tip p {
  margin: 0;
  font-size: 15.500px;
  line-height: 22px;
}

.tip-btn {
  display: block;
  width: 66px;
  height: 22px;
  margin-top: 10px;
  background: #fff;
  border-radius: 3px;
  color: #4a98f0;
  text-align: center;
  line-height: 21px;
}

/* dialog */
.dialog {
  position: absolute;
  left: 433px;
  top: 184px;
  width: 1383px;
  height: 909px;
  background: #eee;
  box-shadow: 2px 2px 5px rgba(0, 0, 0, 0.45);
  display: flex;
  flex-direction: column;
}

.dlg-title {
  height: 34px;
  flex: none;
  background: #2d7de0;
  color: #fff;
  display: flex;
  align-items: center;
  justify-content: space-between;
  padding: 0 0 2px 11px;
}

.dlg-win {
  display: flex;
  gap: 24px;
  padding-right: 11px;
}

.dlg-tabs {
  height: 50px;
  flex: none;
  display: flex;
  align-items: flex-end;
  gap: 4px;
  padding-left: 15px;
}

.dtab {
  width: 75px;
  height: 26px;
  text-align: center;
  line-height: 23px;
  background: #e2e2e2;
  color: #666;
  border-radius: 4px 4px 0 0;
}

.dtab.first-tab { width: 78px; }

.dtab.on {
  width: 74px;
  height: 31px;
  background: #fff;
  color: #2b86e0;
  line-height: 27px;
  border: 1px solid #ddd;
  border-bottom: 0;
  margin-bottom: -1px;
  position: relative;
}

.dlg-pane {
  width: 1352px;
  height: 770px;
  margin-left: 15px;
  flex: none;
  background: #fff;
  border: 1px solid #ddd;
  padding: 10px 11px 12px 12px;
  display: flex;
  gap: 8px;
}

.dlg-list {
  width: 149px;
  flex: none;
  border: 2px solid #c9c9c9;
  padding: 0 1px;
}

.li {
  height: 37.500px;
  line-height: 37px;
  padding-left: 3px;
  white-space: nowrap;
  color: #333;
}

.li:first-child { margin-top: -2px; }

.li.on { background: #b0cbee; }

.dlg-main {
  flex: 1;
  display: flex;
  border: 1px solid #ddd;
  border-top: 2px solid #ddd;
  min-width: 0;
}

.ngrid {
  width: 669px;
  flex: none;
  display: grid;
  grid-template-columns: 27px 389px 252px;
  grid-template-rows: 25px repeat(9, 26.200px);
  align-content: start;
  border-right: 1px solid #ddd;
}

.nc {
  border-bottom: 2px solid #dcdcdc;
  white-space: nowrap;
  line-height: 24px;
  position: relative;
  color: #333;
  overflow: hidden;
}

.nnum {
  background: #eee;
  text-align: center;
  border-right: 1px solid #ddd;
  color: #555;
}

.nnum.cur {
  background: #7db8f8;
  color: #fff;
}

.nhdr {
  background: #eee;
  text-align: center;
  color: #555;
}

.nhdr.sel {
  background: #7db8f8;
  color: #fff;
  border-bottom-color: #7db8f8;
}

.nname {
  background: #ffffcd;
  padding-left: 4px;
  border-right: 1px solid #ddd;
}

.nval { padding-left: 5px; }

.nval.edit {
  border: 2px solid #c8dffa;
  border-bottom-color: #9cc7f7;
  padding-left: 4px;
  line-height: 22px;
}

.selected {
  background: #a9c4e8;
  color: #666;
}

.dots.small { width: 16px; right: 6px; top: 2px; }

.dlg-side {
  flex: 1;
  display: flex;
  flex-direction: column;
}

.side-top {
  height: 246px;
  flex: none;
  border-bottom: 1px solid #ddd;
}

.side-box {
  flex: 1;
  background: #eee;
  padding: 4px 0 0 5px;
}

.side-cap {
  height: 23px;
  padding-left: 3px;
  line-height: 22px;
}

.detail {
  display: block;
  background: #000;
}

.d-title {
  font-size: 26px;
  fill: #e0e0e0;
}

.d-dim {
  font-family: "Liberation Serif", serif;
  font-size: 29px;
  fill: #e6e6e6;
}

.d-dim.green { fill: #00d000; }

.d-node {
  font-size: 34px;
  fill: #00e5e5;
}

.side-desc {
  margin: 8px 0 0 -1px;
  font-size: 15.150px;
  line-height: 21.500px;
  white-space: nowrap;
  color: #333;
}

.dlg-foot {
  position: relative;
  flex: 1;
  display: flex;
  gap: 10px;
  padding: 8px 0 0 16px;
}

.fbtn {
  width: 98px;
  height: 31px;
  text-align: center;
  line-height: 30px;
  background: #fff;
  border: 1px solid #ddd;
  border-radius: 3px;
  color: #444;
}

.grip {
  position: absolute;
  right: 3px;
  bottom: 3px;
}
```
